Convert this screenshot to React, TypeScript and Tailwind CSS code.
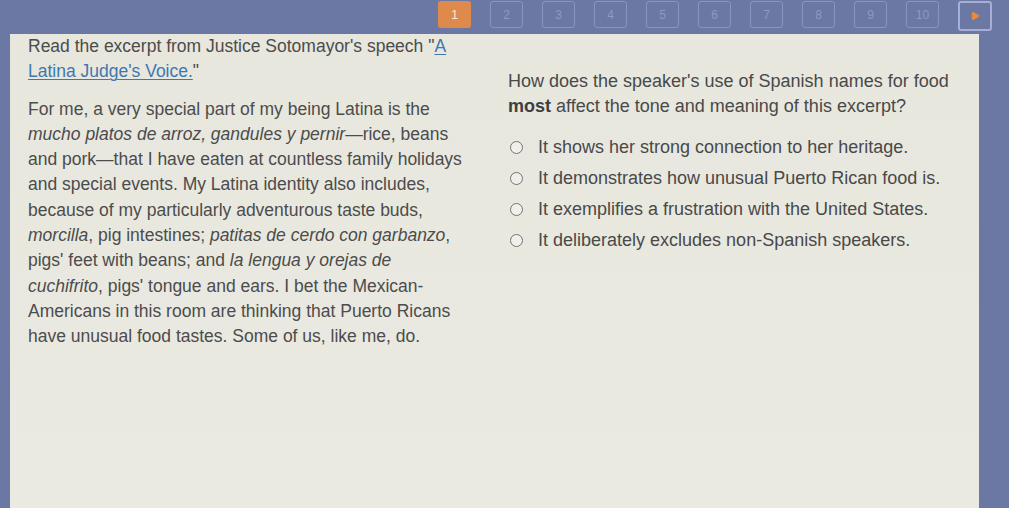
import { Play } from "lucide-react";

const PAGES = [1, 2, 3, 4, 5, 6, 7, 8, 9, 10];

const OPTIONS = [
  "It shows her strong connection to her heritage.",
  "It demonstrates how unusual Puerto Rican food is.",
  "It exemplifies a frustration with the United States.",
  "It deliberately excludes non-Spanish speakers.",
];

function PageBar() {
  return (
    <div className="flex h-[34px] shrink-0 items-start justify-end gap-[19px] pr-[17px] pt-[1px]">
      {PAGES.map((n) => (
        <div
          key={n}
          className={
            n === 1
              ? "flex h-[27px] w-[33px] items-center justify-center rounded-[3px] bg-[#de8a4c] text-[13px] text-[#f6e6d6]"
              : "flex h-[27px] w-[33px] items-center justify-center rounded-[3px] border border-[#8a94c0] text-[12px] text-[#8f99c2]"
          }
        >
          {n}
        </div>
      ))}
      <div className="flex h-[30px] w-[34px] items-center justify-center rounded-[3px] border-2 border-[#a7afd6]">
        <Play size={10} className="fill-[#e58a3a] text-[#e58a3a]" />
      </div>
    </div>
  );
}

function Passage() {
  return (
    <div className="w-[470px] shrink-0 whitespace-nowrap pl-[18px] text-[17.5px] leading-[25.3px] text-[#4c4c4c]">
      <p>
        Read the excerpt from Justice Sotomayor's speech "
        <span className="text-[#3f78b0] underline decoration-1 underline-offset-2">
          A<br />
          Latina Judge's Voice.
        </span>
        "
      </p>
      <p className="mt-[12px]">
        For me, a very special part of my being Latina is the
        <br />
        <i>mucho platos de arroz, gandules y pernir</i>—rice, beans
        <br />
        and pork—that I have eaten at countless family holidays
        <br />
        and special events. My Latina identity also includes,
        <br />
        because of my particularly adventurous taste buds,
        <br />
        <i>morcilla</i>, pig intestines; <i>patitas de cerdo con garbanzo</i>,
        <br />
        pigs' feet with beans; and <i>la lengua y orejas de</i>
        <br />
        <i>cuchifrito</i>, pigs' tongue and ears. I bet the Mexican-
        <br />
        Americans in this room are thinking that Puerto Ricans
        <br />
        have unusual food tastes. Some of us, like me, do.
      </p>
    </div>
  );
}

function Question() {
  return (
    <div className="flex-1 whitespace-nowrap pl-[28px] pt-[35px] text-[18px] leading-[25px] text-[#494949]">
      <p>
        How does the speaker's use of Spanish names for food
        <br />
        <b className="font-bold text-[#3f3f3f]">most</b> affect the tone and meaning of this excerpt?
      </p>
      <div className="mt-[16px] flex flex-col gap-[6px]">
        {OPTIONS.map((o) => (
          <label key={o} className="flex items-center gap-[15px] pl-[2px]">
            <span className="h-[13px] w-[13px] shrink-0 rounded-full border-[1.5px] border-[#727272] bg-[#f0f0ea]" />
            <span>{o}</span>
          </label>
        ))}
      </div>
    </div>
  );
}

export default function App() {
  return (
    <div
      className="flex h-[508px] w-[1009px] flex-col overflow-hidden bg-[#6c78a4]"
      style={{ fontFamily: '"Liberation Sans", Arial, sans-serif' }}
    >
      <PageBar />
      <div className="ml-[10px] mr-[30px] flex flex-1 bg-gradient-to-b from-[#e7e7de] to-[#ebeae2]">
        <Passage />
        <Question />
      </div>
    </div>
  );
}
